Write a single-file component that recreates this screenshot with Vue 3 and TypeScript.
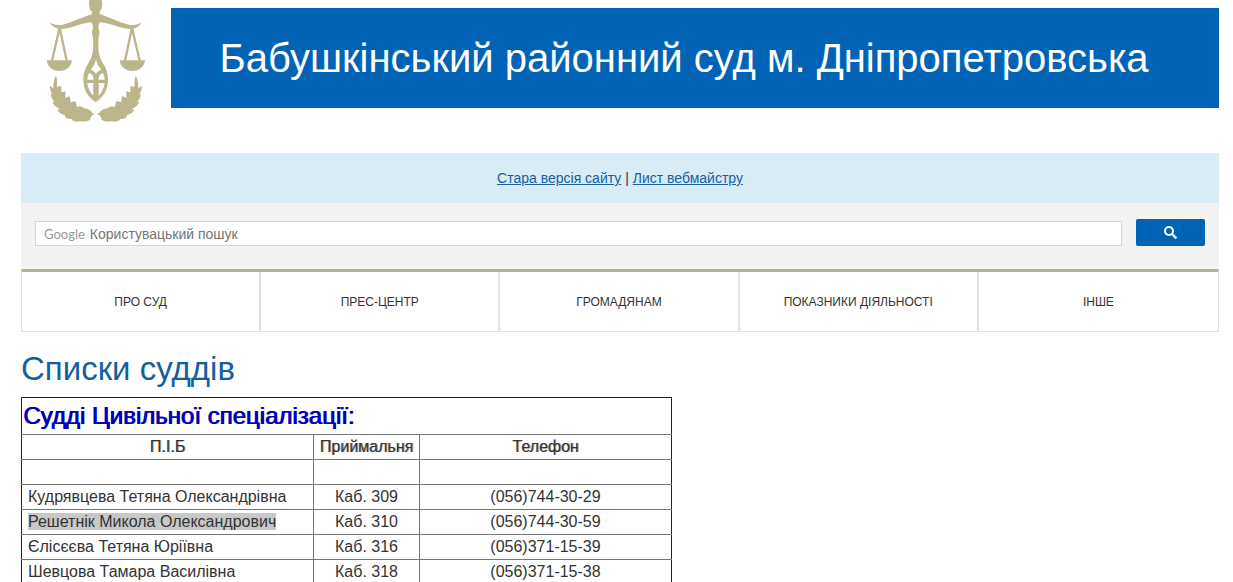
<script setup lang="ts">
import { ref } from 'vue'

interface Judge {
  name: string
  room: string
  phone: string
  marked?: boolean
}

const query = ref('')

const menu: string[] = ['ПРО СУД', 'ПРЕС-ЦЕНТР', 'ГРОМАДЯНАМ', 'ПОКАЗНИКИ ДІЯЛЬНОСТІ', 'ІНШЕ']

const judges: Judge[] = [
  { name: 'Кудрявцева Тетяна Олександрівна', room: 'Каб. 309', phone: '(056)744-30-29' },
  { name: 'Решетнік Микола Олександрович', room: 'Каб. 310', phone: '(056)744-30-59', marked: true },
  { name: 'Єлісєєва Тетяна Юріївна', room: 'Каб. 316', phone: '(056)371-15-39' },
  { name: 'Шевцова Тамара Василівна', room: 'Каб. 318', phone: '(056)371-15-38' },
]
</script>

<template>
  <div class="page">
    <header class="header">
      <svg class="logo" viewBox="3 0 450 405" aria-hidden="true">
        <g fill="#bab58b">
          <path d="M208 0 Q206 8 208 18 Q208 30 216 35 L216 42 C190 50 160 66 128 74 C112 77 100 75 89 67 C94 78 104 84 118 87 C150 88 184 68 214 67 Q220 76 219 84 Q213 96 219 111 C222 150 218 170 205 190 C195 205 190 220 190 238 C190 270 204 292 227 307 C250 292 264 270 264 238 C264 220 259 205 249 190 C236 170 233 150 236 111 Q241 96 235 84 Q234 76 240 67 C270 68 304 88 336 87 C350 84 360 78 365 67 C354 75 342 77 326 74 C294 66 264 50 239 42 L239 35 Q246 30 246 18 Q249 8 245 0 Z" />
          <path d="M80 181 H156 C154 201 138 213 118 213 C98 213 82 201 80 181 Z" />
          <path d="M299 181 H375 C373 201 357 213 337 213 C317 213 301 201 299 181 Z" />
          <path d="M108 227 Q114 243 111 260 L124 258 L124 277 L136 274 L136 293 L149 288 L152 307 L166 303 L171 321 Q180 317 187 321 L192 325 Q211 327 217 339 L224 342 L216 346 Q211 351 210 359 Q200 367 180 364 Q161 368 154 357 Q137 358 133 344 Q117 341 112 329 L120 327 Q101 319 97 304 L105 306 Q92 295 93 281 L99 284 Q88 273 90 257 L100 265 Q99 242 108 227 Z" />
          <path d="M347 227 Q341 243 344 260 L331 258 L331 277 L319 274 L319 293 L306 288 L303 307 L289 303 L284 321 Q275 317 268 321 L263 325 Q244 327 238 339 L230 342 L239 346 Q244 351 245 359 Q255 367 275 364 Q294 368 301 357 Q318 358 322 344 Q338 341 343 329 L335 327 Q354 319 358 304 L350 306 Q363 295 362 281 L356 284 Q367 273 365 257 L355 265 Q356 242 347 227 Z" />
        </g>
        <g fill="none" stroke="#bab58b" stroke-width="7">
          <path d="M96 182 L119 83 L140 182" />
          <path d="M315 182 L336 83 L359 182" />
        </g>
        <g fill="#fff">
          <path d="M228 177 Q225 195 212 209 Q222 212 228 221 Q234 212 244 209 Q231 195 228 177 Z" />
          <path d="M206 220 Q219 219 221 239 H202 Q202 229 206 220 Z" />
          <path d="M250 220 Q237 219 235 239 H254 Q254 229 250 220 Z" />
          <path d="M202 249 H220 V287 Q206 274 202 249 Z" />
          <path d="M254 249 H236 V287 Q250 274 254 249 Z" />
        </g>
      </svg>
      <h1 class="title">Бабушкінський районний суд м. Дніпропетровська</h1>
    </header>

    <p class="notice">
      <a href="#old">Стара версія сайту</a> | <a href="#mail">Лист вебмайстру</a>
    </p>

    <form class="search" @submit.prevent>
      <label class="field">
        <span class="brand">Google</span>
        <input v-model="query" type="text" placeholder="Користувацький пошук" />
      </label>
      <button class="go" type="submit" aria-label="Пошук">
        <svg viewBox="0 0 13 13" width="13" height="13" fill="none" stroke="#fff" stroke-width="2">
          <circle cx="5" cy="5" r="4" />
          <path d="M8 8 L12.3 12.3" stroke-width="2.4" />
        </svg>
      </button>
    </form>

    <nav class="menu">
      <a v-for="item in menu" :key="item" href="#menu">{{ item }}</a>
    </nav>

    <main>
      <h2 class="heading">Списки суддів</h2>
      <table class="judges">
        <colgroup>
          <col class="c-name" />
          <col class="c-room" />
          <col />
        </colgroup>
        <tbody>
          <tr class="caption">
            <th colspan="3" scope="colgroup">Судді Цивільної спеціалізації:</th>
          </tr>
          <tr class="columns">
            <th scope="col">П.І.Б</th>
            <th scope="col">Приймальня</th>
            <th scope="col">Телефон</th>
          </tr>
          <tr>
            <td></td>
            <td></td>
            <td></td>
          </tr>
          <tr v-for="judge in judges" :key="judge.name">
            <td class="name"><span :class="{ marked: judge.marked }">{{ judge.name }}</span></td>
            <td>{{ judge.room }}</td>
            <td>{{ judge.phone }}</td>
          </tr>
        </tbody>
      </table>
    </main>
  </div>
</template>

<style>
html {
  overflow: hidden;
}

body {
  margin: 0;
  background: #fff;
}
</style>

<style scoped>
.page {
  padding: 0 14px 0 21px;
  font-family: "Liberation Sans", Arial, sans-serif;
  font-size: 16px;
  color: #333;
}

.header {
  display: flex;
  align-items: flex-start;
  height: 153px;
}

.logo {
  flex: none;
  width: 150px;
  height: 135px;
}

.title {
  flex: 1;
  margin: 8px 0 0;
  padding-right: 22px;
  background: #0063b5;
  color: #fff;
  font-size: 40px;
  font-weight: 400;
  line-height: 100px;
  text-align: center;
  white-space: nowrap;
}

.notice {
  margin: 0;
  background: #d9ecf6;
  font-size: 14px;
  line-height: 50px;
  text-align: center;
}

.notice a {
  color: #14609f;
}

.search {
  display: flex;
  align-items: flex-start;
  gap: 14px;
  padding: 16px 14px 23px;
  background: #f3f3f3;
}

.field {
  display: flex;
  flex: 1;
  align-items: center;
  gap: 5px;
  box-sizing: border-box;
  height: 25px;
  margin-top: 2px;
  padding-left: 8px;
  border: 1px solid #d5d5d5;
  background: #fff;
}

.brand {
  color: #999;
  font-family: Lato, sans-serif;
  font-size: 13px;
}

.field input {
  flex: 1;
  min-width: 0;
  padding: 0;
  border: 0;
  outline: 0;
  background: none;
  color: #333;
  font-family: "Liberation Sans", Arial, sans-serif;
  font-size: 14px;
}

.field input::placeholder {
  color: #757575;
}

.go {
  display: flex;
  align-items: center;
  justify-content: center;
  width: 69px;
  height: 27px;
  padding: 0;
  border: 0;
  border-radius: 2px;
  background: #0063b5;
}

.menu {
  display: grid;
  grid-template-columns: repeat(5, 1fr);
  border: 1px solid #e2e2e2;
  border-top: 3px solid #b8b292;
}

.menu a {
  padding-top: 2px;
  border-right: 2px solid #e2e2e2;
  color: #333;
  font-size: 12px;
  line-height: 57px;
  text-align: center;
  text-decoration: none;
}

.menu a:last-child {
  border-right: 0;
}

.heading {
  margin: 19px 0 10px;
  color: #14609f;
  font-size: 33px;
  font-weight: 400;
  line-height: 36px;
}

.judges {
  width: 651px;
  max-width: 100%;
  border: 1px solid #222;
  border-collapse: collapse;
  table-layout: fixed;
}

.c-name {
  width: 292px;
}

.c-room {
  width: 106px;
}

.judges th,
.judges td {
  height: 24px;
  padding: 0;
  border: 1px solid #777;
  line-height: 24px;
  text-align: center;
}

.judges tr:first-child th {
  border-color: #222 #222 #777;
}

.judges tr > :first-child {
  border-left-color: #222;
}

.judges tr > :last-child {
  border-right-color: #222;
}

.judges th {
  font-weight: 400;
}

.judges .columns th {
  text-shadow: 1px 0 0 rgba(51, 51, 51, 0.5);
}

.judges .caption th {
  height: 36px;
  padding-left: 1px;
  color: #00b;
  font-size: 24px;
  line-height: 36px;
  text-align: left;
  text-shadow: 1px 0 0 #00b;
}

.judges .name {
  padding-left: 6px;
  text-align: left;
}

.marked {
  background: #c8c8c8;
}
</style>
